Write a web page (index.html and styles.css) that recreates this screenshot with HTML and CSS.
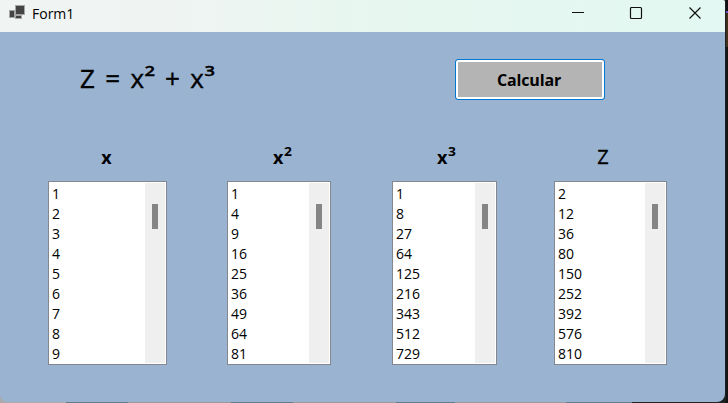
FILE: index.html
```html
<!DOCTYPE html>
<html lang="es">
<head>
<meta charset="utf-8">
<title>Form1</title>
<link rel="stylesheet" href="styles.css">
</head>
<body>
<div class="window">
  <header class="titlebar">
    <svg class="app-icon" width="16" height="15" viewBox="0 0 16 15">
      <path fill="#a5a7a7" d="M0 5h6v8H0zM6 0h10v10H6zM6 10h7v4H6z"/>
      <path fill="#444" d="M1 6h4v6H1zM7 1h8v8H7zM7 11h5v2H7z"/>
    </svg>
    <span class="title">Form1</span>
    <div class="controls">
      <svg width="12" height="13" viewBox="0 0 12 13"><path d="M1 6.5h12"/></svg>
      <svg width="12" height="13" viewBox="0 0 12 13"><rect x=".5" y="1.5" width="11" height="11" rx="1"/></svg>
      <svg width="12" height="13" viewBox="0 0 12 13"><path d="M.5 1.5l11 11M11.5 1.5l-11 11"/></svg>
    </div>
  </header>
  <main class="form">
    <div class="top">
      <h1 class="formula">Z = x<span class="sup">2</span> + x<span class="sup">3</span></h1>
      <button class="calc">Calcular</button>
    </div>
    <div class="columns">
      <section class="col"><h2 class="plain">x</h2>
        <div class="list"><ul><li>1</li><li>2</li><li>3</li><li>4</li><li>5</li><li>6</li><li>7</li><li>8</li><li>9</li></ul><div class="scroll"><div class="thumb"></div></div></div></section>
      <section class="col"><h2 class="shift">x<span class="sup">2</span></h2>
        <div class="list"><ul><li>1</li><li>4</li><li>9</li><li>16</li><li>25</li><li>36</li><li>49</li><li>64</li><li>81</li></ul><div class="scroll"><div class="thumb"></div></div></div></section>
      <section class="col"><h2>x<span class="sup">3</span></h2>
        <div class="list"><ul><li>1</li><li>8</li><li>27</li><li>64</li><li>125</li><li>216</li><li>343</li><li>512</li><li>729</li></ul><div class="scroll"><div class="thumb"></div></div></div></section>
      <section class="col"><h2 class="result">Z</h2>
        <div class="list"><ul><li>2</li><li>12</li><li>36</li><li>80</li><li>150</li><li>252</li><li>392</li><li>576</li><li>810</li></ul><div class="scroll"><div class="thumb"></div></div></div></section>
    </div>
  </main>
</div>
</body>
</html>
```
FILE: styles.css
```css
* { box-sizing: border-box; }
body {
  margin: 0;
  width: 728px;
  height: 403px;
  overflow: hidden;
  font-family: "Open Sans", "Noto Sans", sans-serif;
  color: #000;
  background:
    linear-gradient(90deg, #aaa 0 66px, #657b8e 66px 128px, #999b9d 128px 231px, #657b8e 231px 293px, #999b9d 293px 396px, #657b8e 396px 455px, #999b9d 455px 566px, #657b8e 566px 632px, #222 632px) 0 402px / 725px 1px no-repeat,
    linear-gradient(#aaa, #aaa) 0 390px / 20px 13px no-repeat,
    linear-gradient(#111 0 11px, #6750c8 11px 13px, #40301a 13px 47px, #141414 47px) 726px 0 / 2px 403px no-repeat,
    #1c1e20;
}
.window {
  width: 725px;
  height: 402px;
  overflow: hidden;
  border-radius: 0 2px 8px 8px;
  background: #99b3d1;
}
.titlebar {
  display: flex;
  height: 32px;
  padding: 5px 24px 0 9px;
  background: linear-gradient(90deg, #f0f4f3 0, #eff4f2 170px, #e7f7f0 380px, #e3f8f2 725px);
}
.title { margin-left: 7px; font-size: 14px; line-height: 18px; }
.controls { display: flex; gap: 47px; margin: 1px 0 0 auto; }
.controls svg { overflow: visible; fill: none; stroke: #111; stroke-width: 1.2; }
.top { display: flex; height: 108px; padding: 27px 120px 0 80px; justify-content: space-between; }
.formula { margin: 1px 0 0; font-size: 26px; font-weight: 500; line-height: 36px; white-space: pre; word-spacing: 3.6px; -webkit-text-stroke: .4px #000; }
.sup {
  display: inline-block;
  width: .7em;
  font-size: .58em;
  font-weight: 600;
  line-height: 0;
  transform: translate(.04em, -.8em) scaleX(1.22);
  transform-origin: 0 0;
}
.calc {
  width: 150px;
  height: 41px;
  padding: 0 2px 0 0;
  border: 1px solid #0078d4;
  border-radius: 3px;
  box-shadow: inset 0 0 0 2px #fff;
  background: #b4b4b4;
  color: #000;
  font: 700 16px/20px "Open Sans", sans-serif;
  letter-spacing: -.15px;
}
.columns { display: grid; grid-template-columns: 119px 104px 105px 113px; column-gap: 60px; padding-left: 48px; }
.col:nth-child(3) { margin: 0 -1px 0 1px; }
.col:nth-child(4) { margin: 0 2px 0 -2px; width: 113px; }
.col h2 { height: 41px; margin: 0; padding: 5px 0 0 4px; font-size: 18px; font-weight: 700; line-height: 24px; text-align: center; }
.col h2.plain { padding: 5px 2px 0 0; }
.col h2.shift { padding-left: 7px; }
.col h2 .sup { width: .73em; font-size: .64em; font-weight: 700; transform: translate(-.1em, -.66em) scaleX(1.2); }
.col h2.result { font-size: 20px; font-weight: 500; padding: 5px 15px 0 0; -webkit-text-stroke: .3px #000; }
.list { display: flex; height: 184px; padding: 1px; border: 1px solid #828790; background: #fff; }
.list ul { flex: 1; margin: 0; padding: 1px 0 0 2px; list-style: none; font-size: 14px; line-height: 20px; }
.scroll { width: 20px; padding: 21px 0 0 7px; background: #efefef; }
.thumb { width: 6px; height: 25px; background: #858585; }
```
